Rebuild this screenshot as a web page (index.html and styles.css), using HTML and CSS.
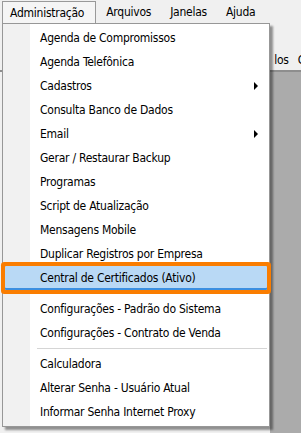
FILE: index.html
```html
<!DOCTYPE html>
<html>
    <head>
        <title>Menu Administração</title>
        <link rel="stylesheet" href="styles.css">
    </head>
    <body>
        <ul class="menubar">
            <li class="top-item active">Administração</li>
            <li class="top-item">Arquivos</li>
            <li class="top-item">Janelas</li>
            <li class="top-item">Ajuda</li>
        </ul>
        <div class="toolbar">
            <span class="tool-label">los</span>
            <span class="tool-label">C</span>
        </div>
        <div class="desk">
            <div class="panel"></div>
        </div>

        <ul class="dropdown">
            <li class="item">Agenda de Compromissos</li>
            <li class="item">Agenda Telefônica</li>
            <li class="item sub">Cadastros</li>
            <li class="item">Consulta Banco de Dados</li>
            <li class="item sub">Email</li>
            <li class="item">Gerar / Restaurar Backup</li>
            <li class="item">Programas</li>
            <li class="item">Script de Atualização</li>
            <li class="item">Mensagens Mobile</li>
            <li class="item">Duplicar Registros por Empresa</li>
            <li class="item hover">Central de Certificados (Ativo)</li>
            <li class="sep"></li>
            <li class="item">Configurações - Padrão do Sistema</li>
            <li class="item">Configurações - Contrato de Venda</li>
            <li class="sep"></li>
            <li class="item">Calculadora</li>
            <li class="item">Alterar Senha - Usuário Atual</li>
            <li class="item">Informar Senha Internet Proxy</li>
        </ul>
    </body>
</html>
```

FILE: styles.css
```css
html, body {
  margin: 0;
  padding: 0;
  height: 100%;
  overflow: hidden;
}

body {
  font-family: "DejaVu Sans Condensed", "Liberation Sans", sans-serif;
  font-size: 12px;
  letter-spacing: -0.25px;
  color: #000;
  background: #ababab;
  position: relative;
  display: flex;
  flex-direction: column;
}

ul {
  list-style: none;
  margin: 0;
  padding: 0;
}

/* top menu bar */
.menubar {
  display: flex;
  height: 24px;
  background: #f0f0f0;
  padding-left: 2px;
  flex: none;
}

.top-item {
  padding: 0 10px 0 9px;
  line-height: 24px;
}

.top-item.active {
  background: #f5f5f5;
  border: 1px solid #999;
  border-bottom: none;
  margin-top: 1px;
  line-height: 22px;
  padding: 0 11px 0 7px;
  margin-right: 1px;
}

.toolbar {
  height: 48px;
  flex: none;
  background: #f0f0f0;
  display: flex;
  justify-content: flex-end;
  gap: 9px;
  box-sizing: border-box;
  border-bottom: 2px solid #8e8e8e;
  padding-right: 0;
  margin-right: -4px;
}

.tool-label {
  padding-top: 29px;
}

.desk {
  flex: 1;
  display: flex;
  background: #ababab;
}

.panel {
  width: 270px;
  background: #f0f0f0;
}

/* dropdown menu */
.dropdown {
  position: absolute;
  left: 2px;
  top: 23px;
  width: 262px;
  padding: 2px;
  background: #fff linear-gradient(to right, #f1f1f1 27px, #fff 27px);
  border: 1px solid #979797;
  box-shadow: 3px 3px 2px rgba(0, 0, 0, 0.4);
}

.item {
  height: 24px;
  line-height: 24px;
  padding-left: 35px;
  position: relative;
  white-space: nowrap;
}

.item.sub::after {
  content: "";
  position: absolute;
  right: 9px;
  top: 8px;
  border-left: 4px solid #000;
  border-top: 4px solid transparent;
  border-bottom: 4px solid transparent;
}

.item.hover {
  background: #b9d9f5;
  border-radius: 1px;
  box-shadow: inset 0 -2px 0 #3c8fe0, 0 0 0 4px #fa7d00;
}

.sep {
  height: 1px;
  background: #d5d5d5;
  border-bottom: 1px solid #fff;
  margin: 3px 0 2px 32px;
}
```
